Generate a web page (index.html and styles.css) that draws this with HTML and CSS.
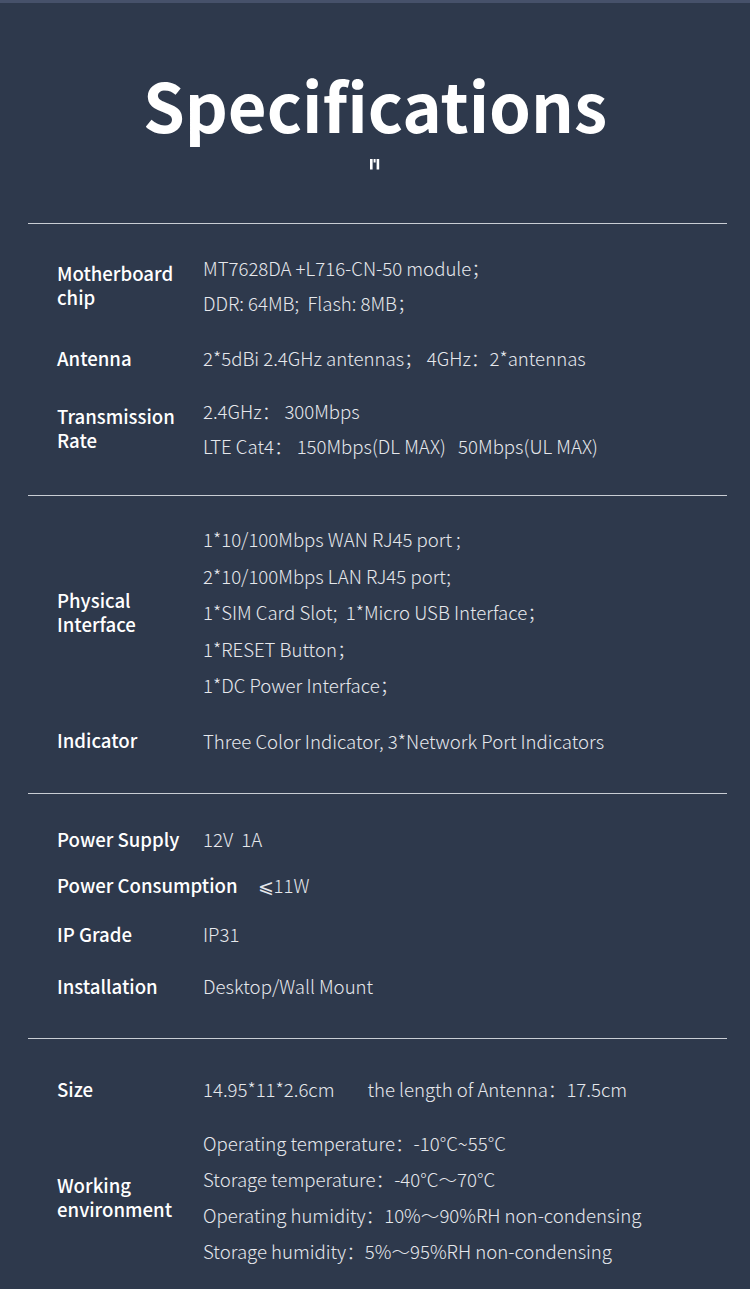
FILE: index.html
```html
<!DOCTYPE html>
<html lang="en">
<head>
<meta charset="utf-8">
<title>Specifications</title>
<link rel="stylesheet" href="styles.css">
</head>
<body>
<div class="page">
  <header class="header">
    <h1 class="title">Specifications</h1>
    <svg class="mark" width="10" height="11" viewBox="0 0 10 11" aria-hidden="true">
      <rect x="0" y="0" width="2.6" height="10.5" fill="#ffffff"/>
      <rect x="3.6" y="0" width="2" height="3.5" fill="#ffffff"/>
      <rect x="6.6" y="0" width="2.6" height="10.5" fill="#ffffff"/>
    </svg>
  </header>

  <section class="section s1">
    <div class="row">
      <div class="label"><span>Motherboard</span><span>chip</span></div>
      <div class="value"><p>MT7628DA +L716-CN-50 module；</p><p>DDR: 64MB;&nbsp; Flash: 8MB；</p></div>
    </div>
    <div class="row">
      <div class="label"><span>Antenna</span></div>
      <div class="value"><p>2*5dBi 2.4GHz antennas；&nbsp;4GHz：2*antennas</p></div>
    </div>
    <div class="row">
      <div class="label"><span>Transmission</span><span>Rate</span></div>
      <div class="value"><p>2.4GHz：&nbsp;300Mbps</p><p>LTE Cat4：&nbsp;150Mbps(DL MAX)&nbsp;&nbsp; 50Mbps(UL MAX)</p></div>
    </div>
  </section>

  <section class="section s2">
    <div class="row">
      <div class="label"><span>Physical</span><span>Interface</span></div>
      <div class="value tall"><p>1*10/100Mbps WAN RJ45 port ;</p><p>2*10/100Mbps LAN RJ45 port;</p><p>1*SIM Card Slot;&nbsp; 1*Micro USB Interface；</p><p>1*RESET Button；</p><p>1*DC Power Interface；</p></div>
    </div>
    <div class="row">
      <div class="label"><span>Indicator</span></div>
      <div class="value"><p>Three Color Indicator, 3*Network Port Indicators</p></div>
    </div>
  </section>

  <section class="section s3">
    <div class="row">
      <div class="label"><span>Power Supply</span></div>
      <div class="value"><p>12V&nbsp; 1A</p></div>
    </div>
    <div class="row">
      <div class="label"><span>Power Consumption</span></div>
      <div class="value"><p>⩽11W</p></div>
    </div>
    <div class="row">
      <div class="label"><span>IP Grade</span></div>
      <div class="value"><p>IP31</p></div>
    </div>
    <div class="row">
      <div class="label"><span>Installation</span></div>
      <div class="value"><p>Desktop/Wall Mount</p></div>
    </div>
  </section>

  <section class="section s4">
    <div class="row">
      <div class="label"><span>Size</span></div>
      <div class="value"><p>14.95*11*2.6cm<span class="sp"></span>the length of Antenna：17.5cm</p></div>
    </div>
    <div class="row">
      <div class="label"><span>Working</span><span>environment</span></div>
      <div class="value"><p>Operating temperature：-10°C~55°C</p><p>Storage temperature：-40°C～70°C</p><p>Operating humidity：10%～90%RH non-condensing</p><p>Storage humidity：5%～95%RH non-condensing</p></div>
    </div>
  </section>
</div>
</body>
</html>
```

FILE: styles.css
```css
html, body {
  margin: 0;
  padding: 0;
  background: #2e394c;
}

body {
  font-family: "Noto Sans CJK SC", "Noto Sans", sans-serif;
  color: #ffffff;
}

.page {
  border-top: 3px solid #46516a;
  min-height: 1286px;
}

.header {
  height: 220px;
  display: flex;
  flex-direction: column;
  align-items: center;
  padding-top: 1px;
  box-sizing: border-box;
}

.title {
  margin: 0;
  margin-top: 66px;
  font-size: 67px;
  line-height: 67px;
  font-weight: 700;
  letter-spacing: 0;
  color: #ffffff;
}

.mark {
  display: block;
  margin-top: 22px;
  margin-left: 0;
}

.section {
  margin: 0 23px 0 28px;
  border-top: 1px solid #c9cdd4;
  display: flex;
  flex-direction: column;
}

.s1 { padding: 26px 0 32px; gap: 18px; }
.s1 .row:nth-child(2) { margin-top: 2px; }
.s2 { padding: 25px 0 35px; gap: 19px; }
.s3 { padding: 27px 0 34px; gap: 10px; }
.s3 .row:nth-child(3) { margin-top: 3px; }
.s3 .row:nth-child(4) { margin-top: 6px; }
.s4 { padding: 32px 0 20px; gap: 18px; }

.row {
  display: flex;
  align-items: center;
  gap: 20px;
  padding-left: 29px;
}

.label {
  min-width: 126px;
  display: flex;
  flex-direction: column;
  font-size: 18.6px;
  line-height: 24px;
  font-weight: 500;
  color: #ffffff;
}

.label span {
  display: block;
  height: 24px;
  white-space: nowrap;
}

.value {
  font-size: 18.6px;
  font-weight: 300;
  color: #e6e8ec;
}

.value p {
  margin: 0;
  line-height: 35px;
  white-space: nowrap;
}

.value.tall p {
  line-height: 36.5px;
}

.s3 .value p,
.s4 .value p {
  line-height: 36px;
}

.sp {
  display: inline-block;
  width: 33px;
}
```
